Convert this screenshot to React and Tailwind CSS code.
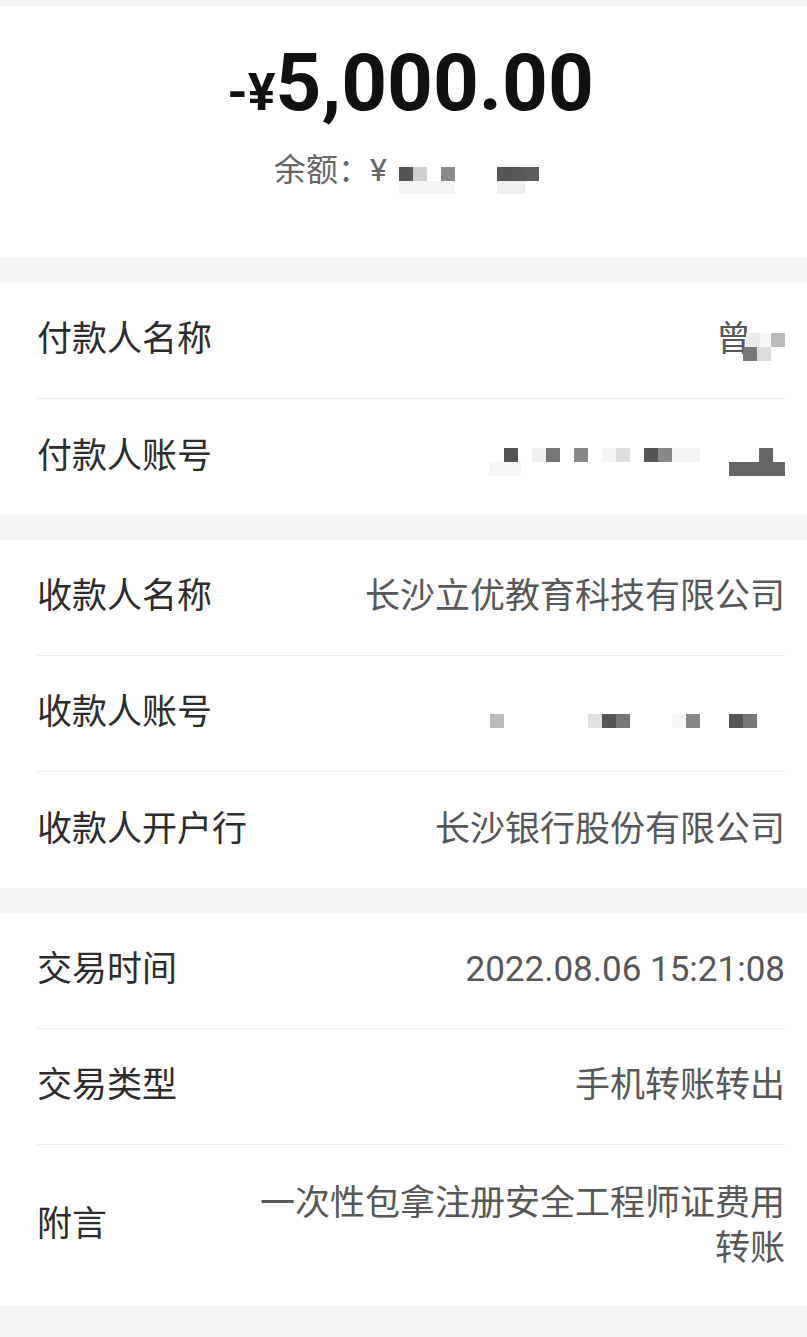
const font = "font-['Roboto','Noto_Sans_CJK_SC',sans-serif]";

// blurred mosaic blocks that hide private numbers
function Mosaic({ width, height = 40, cells, className = "" }) {
  return (
    <svg width={width} height={height} className={"block shrink-0 " + className}>
      {cells.map(([x, y, w, h, fill], i) => (
        <rect key={i} x={x} y={y} width={w} height={h} fill={fill} />
      ))}
    </svg>
  );
}

function Row({ label, children, last, tall }) {
  return (
    <div
      className={
        "flex items-center justify-between " +
        (tall ? "h-[161px]" : "h-[116px]") +
        (last ? "" : " border-b border-[#ececec]")
      }
    >
      <div className="shrink-0 text-[35px] text-[#2c2c2c]">{label}</div>
      <div className="flex items-center justify-end text-right text-[35px] text-[#575757]">
        {children}
      </div>
    </div>
  );
}

function Card({ children }) {
  return (
    <div className="bg-white">
      <div className="ml-[37px] mr-[22px]">{children}</div>
    </div>
  );
}

export default function App() {
  return (
    <div className={"min-h-[1337px] w-full bg-[#f5f5f5] pt-[6px] " + font}>
      <div className="flex h-[251px] flex-col items-center bg-white pl-[14px] pt-[37px]">
        <div className="flex items-baseline font-bold leading-[80px] text-[#111]">
          <span className="text-[52px]">-¥</span>
          <span className="text-[80px]">5,000.00</span>
        </div>
        <div className="mt-[17px] flex items-start text-[32px] leading-[40px] text-[#666]">
          <span>余额：¥</span>
          <Mosaic
            width={160}
            height={48}
            cells={[
              [12, 31, 56, 13, "#f4f4f4"],
              [110, 31, 28, 13, "#efefef"],
              [12, 17, 14, 14, "#555"],
              [26, 17, 14, 14, "#cfcfcf"],
              [54, 17, 14, 14, "#888"],
              [110, 17, 14, 14, "#555"],
              [124, 17, 14, 14, "#585858"],
              [138, 17, 14, 14, "#5c5c5c"],
            ]}
          />
        </div>
      </div>

      <div className="mt-[26px]">
        <Card>
          <Row label="付款人名称">
            <span>曾</span>
            <Mosaic
              width={42}
              className="-ml-[8px]"
              cells={[
                [3, 12, 14, 14, "#ebebeb"],
                [17, 12, 11, 14, "#f7f7f7"],
                [28, 12, 14, 14, "#bbb"],
                [0, 26, 14, 14, "#777"],
                [14, 26, 14, 14, "#dcdcdc"],
              ]}
            />
          </Row>
          <Row label="付款人账号" last>
            <Mosaic
              width={296}
              cells={[
                [0, 25, 32, 14, "#f6f6f6"],
                [15, 11, 14, 14, "#555"],
                [43, 11, 14, 14, "#f0f0f0"],
                [57, 11, 14, 14, "#777"],
                [85, 11, 14, 14, "#888"],
                [113, 11, 14, 14, "#f5f5f5"],
                [127, 11, 14, 14, "#ddd"],
                [155, 11, 14, 14, "#555"],
                [169, 11, 14, 14, "#888"],
                [183, 11, 28, 14, "#f5f5f5"],
                [270, 11, 14, 14, "#666"],
                [240, 25, 56, 14, "#666"],
              ]}
            />
          </Row>
        </Card>
      </div>

      <div className="mt-[25px]">
        <Card>
          <Row label="收款人名称">长沙立优教育科技有限公司</Row>
          <Row label="收款人账号">
            <Mosaic
              width={296}
              cells={[
                [1, 20, 14, 14, "#bbb"],
                [99, 20, 14, 14, "#e0e0e0"],
                [113, 20, 14, 14, "#555"],
                [127, 20, 14, 14, "#777"],
                [183, 20, 14, 14, "#f7f7f7"],
                [197, 20, 14, 14, "#888"],
                [240, 20, 14, 14, "#555"],
                [254, 20, 14, 14, "#777"],
              ]}
            />
          </Row>
          <Row label="收款人开户行" last>
            长沙银行股份有限公司
          </Row>
        </Card>
      </div>

      <div className="mt-[25px]">
        <Card>
          <Row label="交易时间">2022.08.06 15:21:08</Row>
          <Row label="交易类型">手机转账转出</Row>
          <Row label="附言" last tall>
            <div className="max-w-[535px] leading-[45px]">一次性包拿注册安全工程师证费用转账</div>
          </Row>
        </Card>
      </div>
    </div>
  );
}
